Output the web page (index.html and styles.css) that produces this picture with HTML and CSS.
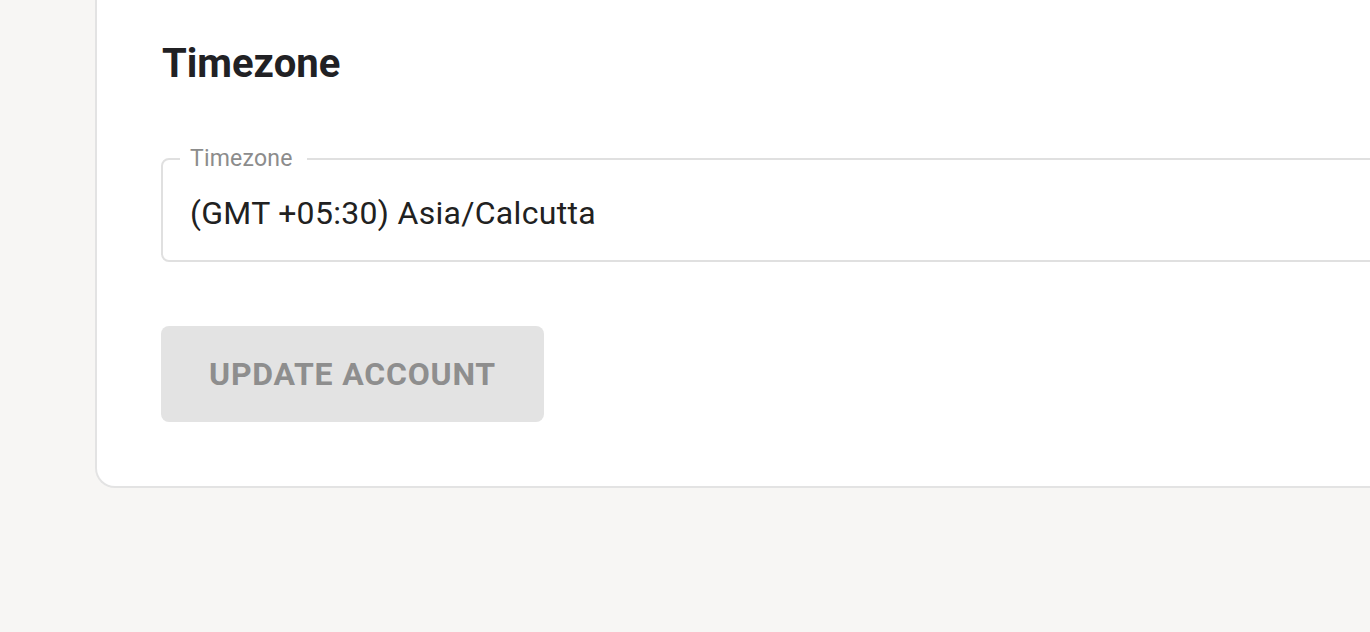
FILE: index.html
```html
<!DOCTYPE html>
<html lang="en">
<head>
<meta charset="utf-8">
<title>Timezone</title>
<link rel="stylesheet" href="styles.css">
</head>
<body>
<main class="page">
  <section class="card">
    <h2 class="card-title">Timezone</h2>
    <div class="field">
      <fieldset class="field-outline">
        <legend class="field-legend">Timezone</legend>
      </fieldset>
      <div class="field-value">(GMT +05:30) Asia/Calcutta</div>
    </div>
    <div class="actions">
      <button class="btn-disabled" type="button" disabled>Update Account</button>
    </div>
  </section>
</main>
</body>
</html>
```

FILE: styles.css
```css
html, body {
  margin: 0;
  padding: 0;
  height: 100%;
}
body {
  background: #f7f6f4;
  font-family: Roboto, "Noto Sans", sans-serif;
  overflow: hidden;
}
.page {
  padding-left: 95px;
}
.card {
  box-sizing: border-box;
  width: 1400px;
  background: #ffffff;
  border: 2px solid #e3e3e3;
  border-top: 0;
  border-radius: 0 0 20px 20px;
  padding: 40px 0 64px 64px;
}
.card-title {
  margin: 0;
  padding-left: 1px;
  font-size: 40px;
  line-height: 48px;
  font-weight: 700;
  color: #212124;
}
.field {
  position: relative;
  margin-top: 71px;
  width: 1300px;
  height: 103px;
}
.field-outline {
  position: absolute;
  inset: -10px 0 0 0;
  margin: 0;
  padding: 0 17px;
  border: 2px solid #e0e0e0;
  border-radius: 8px;
}
.field-legend {
  padding: 0 14px 0 10px;
  font-size: 23px;
  line-height: 20px;
  letter-spacing: 0.2px;
  color: #8c8c8c;
}
.field-value {
  position: relative;
  padding: 34px 29px 0 29px;
  font-size: 32px;
  line-height: 40px;
  letter-spacing: 0.3px;
  color: #212121;
}
.actions {
  margin-top: 64px;
}
.btn-disabled {
  display: block;
  height: 96px;
  padding: 0 48px;
  border: 0;
  border-radius: 8px;
  background: #e3e3e3;
  color: #8e8e8e;
  font-family: Roboto, sans-serif;
  font-size: 32px;
  font-weight: 700;
  letter-spacing: 0.8px;
  text-transform: uppercase;
}
```
